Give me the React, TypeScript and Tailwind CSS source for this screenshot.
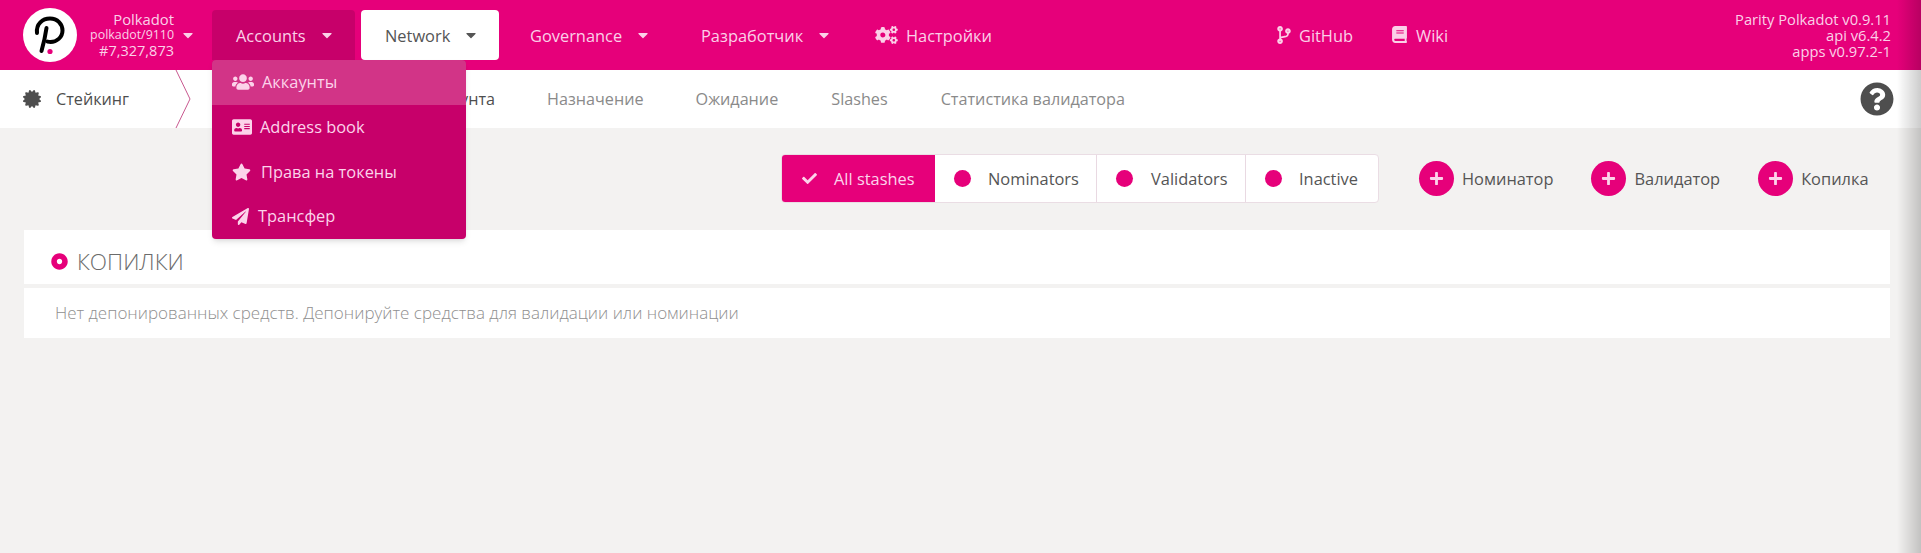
import React from "react";
import { FaUsers, FaAddressCard, FaStar, FaPaperPlane, FaCogs, FaCodeBranch, FaBook, FaCheck, FaCertificate, FaQuestionCircle, FaPlus, FaCaretDown, FaDotCircle } from "react-icons/fa";

const Caret = ({ className = "" }: { className?: string }) => <FaCaretDown className={"w-[16px] h-[16px] " + className} />;

const Logo = () => (
  <div className="w-[54px] h-[54px] rounded-full bg-white flex items-center justify-center shrink-0">
    <svg viewBox="0 0 54 54" className="w-[54px] h-[54px]">
      <path d="M14 25 C13 16 19.5 10.5 27 10.5 C34.5 10.5 39.5 16 39.5 22.5 C39.5 29.5 33.5 34 27.5 34 C26.5 34 25.5 33.8 24.5 33.6" fill="none" stroke="#000" strokeWidth="4" strokeLinecap="round" />
      <path d="M23.5 20 C22.5 27 20.5 36 18.5 43" fill="none" stroke="#000" strokeWidth="4" strokeLinecap="round" />
      <circle cx="27" cy="43.5" r="2.6" fill="#e6007a" />
    </svg>
  </div>
);

const NavItem = ({ label, className }: { label: string; className: string }) => (
  <div className={"flex items-center text-[#fbd0e8] text-[16.4px] " + className}>
    <span className="pt-[2px]">{label}</span>
    <Caret className="ml-[13px]" />
  </div>
);

const MenuRow = ({ icon, label, active, gap }: { icon: React.ReactNode; label: string; active?: boolean; gap: string }) => (
  <div className={"h-[44.75px] flex items-center pl-[20px] text-[16.4px] text-[#fcd3ea] " + gap + (active ? " bg-[#d23487]" : "")}>
    {icon}
    <span>{label}</span>
  </div>
);

const Segment = ({ label, width, gap = "gap-[18px]" }: { label: string; width: string; gap?: string }) => (
  <div className={"h-full flex items-center pl-[19px] border-r border-[#e9d9e2] last:border-r-0 text-[#555] " + gap + " " + width}>
    <span className="w-[17px] h-[17px] rounded-full bg-[#e6007a]" />
    <span className="pt-[1px]">{label}</span>
  </div>
);

const AddButton = ({ label }: { label: string }) => (
  <div className="flex items-center gap-[8px] text-[16.4px] text-[#555]">
    <span className="w-[35px] h-[35px] rounded-full bg-[#e6007a] flex items-center justify-center">
      <FaPlus className="w-[15px] h-[15px] text-[#fcd3ea]" />
    </span>
    <span className="pt-[1px]">{label}</span>
  </div>
);

export default function App() {
  return (
    <div className="relative w-[1921px] h-[553px] bg-[#f3f2f1] overflow-hidden font-['Open_Sans',sans-serif]">
      <header className="h-[70px] bg-[#e6007a] flex items-center pl-[23px] pr-[30px]">
        <Logo />
        <div className="w-[97px] text-right text-[#fbd0e8] text-[12.4px] leading-[16px]">
          <div className="text-[14.8px]">Polkadot</div>
          <div>polkadot/9110</div>
          <div className="text-[14.5px]">#7,327,873</div>
        </div>
        <Caret className="ml-[6px] text-[#fbd0e8]" />
        <div className="relative ml-[16px]">
          <NavItem label="Accounts" className="w-[143px] h-[50px] pl-[24px] rounded-t-[4px] bg-[#c7006a]" />
          <div className="absolute left-0 top-[50px] w-[254px] rounded-[4px] bg-[#c7006a] overflow-hidden z-10 shadow-md">
            <MenuRow active label="Аккаунты" gap="gap-[8px]" icon={<FaUsers className="w-[22px] h-[18px]" />} />
            <MenuRow label="Address book" gap="gap-[8px]" icon={<FaAddressCard className="w-[20px] h-[18px]" />} />
            <MenuRow label="Права на токены" gap="gap-[10px]" icon={<FaStar className="w-[19px] h-[18px]" />} />
            <MenuRow label="Трансфер" gap="gap-[9px]" icon={<FaPaperPlane className="w-[17px] h-[17px]" />} />
          </div>
        </div>
        <div className="ml-[6px] w-[138px] h-[50px] bg-white rounded-[4px] flex items-center pl-[24px] text-[16.4px] text-[#555]">
          <span className="pt-[2px]">Network</span>
          <Caret className="ml-[13px]" />
        </div>
        <NavItem label="Governance" className="ml-[31px] w-[171px]" />
        <NavItem label="Разработчик" className="w-[174px]" />
        <div className="flex items-center gap-[8px] text-[16.4px] text-[#fbd0e8]">
          <FaCogs className="w-[23px] h-[18px]" />
          <span className="pt-[2px]">Настройки</span>
        </div>
        <div className="ml-[285px] flex items-center gap-[8px] text-[16.4px] text-[#fbd0e8]">
          <FaCodeBranch className="w-[14px] h-[18px]" />
          <span className="pt-[2px]">GitHub</span>
        </div>
        <div className="ml-[39px] flex items-center gap-[9px] text-[16.4px] text-[#fbd0e8]">
          <FaBook className="w-[15px] h-[17px]" />
          <span className="pt-[2px]">Wiki</span>
        </div>
        <div className="ml-auto text-right text-[#fbd0e8] text-[14.7px] leading-[16px]">
          <div>Parity Polkadot v0.9.11</div>
          <div>api v6.4.2</div>
          <div>apps v0.97.2-1</div>
        </div>
      </header>

      <nav className="h-[58px] bg-white flex items-center pl-[23px] pr-[27px] text-[16.2px] text-[#8a8a8a]">
        <FaCertificate className="w-[18px] h-[18px] text-[#4e4e4e]" />
        <span className="ml-[15px] w-[72px] text-[#4e4e4e] whitespace-nowrap">Стейкинг</span>
        <svg viewBox="0 0 16 58" className="w-[16px] h-[58px] ml-[47px]">
          <path d="M1 0 L15 29 L1 58" fill="none" stroke="#c8588f" strokeWidth="1" />
        </svg>
        <span className="ml-[134px] w-[170px] text-right whitespace-nowrap text-[#4e4e4e]">Действия аккаунта</span>
        <span className="ml-[52px]">Назначение</span>
        <span className="ml-[52px]">Ожидание</span>
        <span className="ml-[53px]">Slashes</span>
        <span className="ml-[53px]">Статистика валидатора</span>
        <FaQuestionCircle className="ml-auto w-[34px] h-[34px] text-[#4e4e4e]" />
      </nav>

      <div className="pt-[26px] pl-[781px] flex items-center h-[102px] pb-[27px]">
        <div className="h-[49px] w-[598px] flex items-center rounded-[4px] border border-[#eadde4] bg-white text-[16.4px] overflow-hidden">
          <div className="h-full w-[153px] shrink-0 bg-[#e6007a] text-[#fcd3ea] flex items-center pl-[19px] gap-[16px]">
            <FaCheck className="w-[17px] h-[15px]" />
            <span className="pt-[1px]">All stashes</span>
          </div>
          <Segment label="Nominators" width="w-[162px]" gap="gap-[17px]" />
          <Segment label="Validators" width="w-[149px]" />
          <Segment label="Inactive" width="w-[132px]" gap="gap-[17px]" />
        </div>
        <div className="ml-[40px] flex gap-[38px]">
          <AddButton label="Номинатор" />
          <AddButton label="Валидатор" />
          <AddButton label="Копилка" />
        </div>
      </div>

      <section className="ml-[24px] w-[1866px] flex flex-col gap-[4px]">
        <div className="h-[54px] bg-white flex items-center pl-[27px] pt-[9px] gap-[9px] text-[22.5px] font-light text-[#6b6b6b]">
          <FaDotCircle className="w-[17px] h-[17px] text-[#e6007a]" />
          <span>КОПИЛКИ</span>
        </div>
        <div className="h-[50px] bg-white flex items-center pl-[31px] text-[17px] font-light text-[#8f8f8f]">
          Нет депонированных средств. Депонируйте средства для валидации или номинации
        </div>
      </section>

      <div className="absolute right-0 top-0 bottom-0 w-[24px] bg-gradient-to-r from-transparent to-black/20" />
    </div>
  );
}
